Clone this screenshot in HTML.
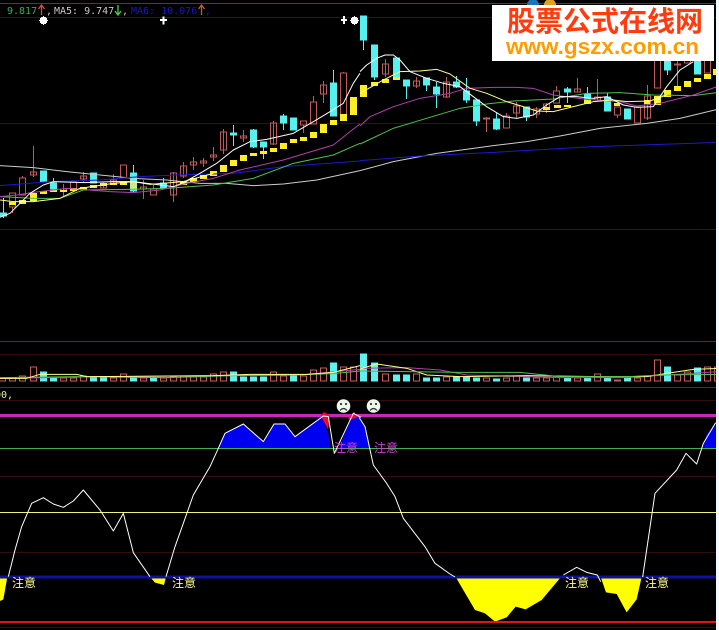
<!DOCTYPE html>
<html><head><meta charset="utf-8"><style>
html,body{margin:0;padding:0;background:#000;width:719px;height:630px;overflow:hidden}
svg{position:absolute;left:0;top:0;display:block}
.h{font-family:"DejaVu Sans Mono",monospace;font-size:10px}
.z{font-family:"WenQuanYi Zen Hei","Noto Sans CJK SC",sans-serif;font-size:12px}
.l{fill:none;stroke-width:3;stroke-linejoin:round}
</style></head><body>
<svg width="719" height="630" viewBox="0 0 719 630" shape-rendering="crispEdges">
<rect width="719" height="630" fill="#000"/>
<g stroke-width="1" fill="none">
<path d="M0 3.5H719" stroke="#a01818"/>
<path d="M0 17.5H719M0 123.5H719M0 229.5H719" stroke="#3c0e0e"/>
<path d="M0 341.5H719M0 387.5H719" stroke="#8a1818"/>
<path d="M0 354.5H719M0 400.5H719M0 476.5H719M0 552.5H719M0 627.5H719" stroke="#300c0c"/>
</g>
<g stroke="#c05a58" fill="none">
<path d="M9.5 193h6v14h-6zM12.5 207V213M19.5 178h6v17h-6zM22.5 176v2M30.5 172h6v3h-6zM33.5 146V177M60.5 189h6v2h-6zM63.5 184V196M70.5 182h6v7h-6zM73.5 189V192M80.5 176h6v3h-6zM83.5 172V182M100.5 184h6v4h-6zM103.5 182V188M110.5 180h6v3h-6zM113.5 174V185M120.5 165h6v13h-6zM140.5 187h6v2h-6zM143.5 180V199M150.5 189h6v6h-6zM153.5 185V189M170.5 173h6v22h-6zM173.5 172V202M180.5 166h6v10h-6zM183.5 162V178M190.5 162h6v3h-6zM193.5 157V170M200.5 161h6v2h-6zM203.5 158V167M210.5 155h6v2h-6zM213.5 147V161M220.5 132h6v18h-6zM223.5 129V154M240.5 136h6v2h-6zM243.5 130V142M270.5 123h6v21h-6zM273.5 121V145M300.5 121h6v4h-6zM303.5 125V133M310.5 102h6v22h-6zM313.5 96V102M320.5 85h6v9h-6zM323.5 81V103M340.5 73h6v42h-6zM343.5 72V73M382.5 64h6v10h-6zM385.5 59V77M413.5 81h6v5h-6zM416.5 77V88M443.5 82h6v15h-6zM446.5 77V98M483.5 118h6v1h-6zM486.5 117V132M503.5 116h6v12h-6zM506.5 113V116M513.5 106h6v7h-6zM516.5 102V118M533.5 109h6v5h-6zM536.5 107V118M543.5 104h6v5h-6zM546.5 103V113M553.5 91h6v12h-6zM556.5 86V91M574.5 89h6v3h-6zM577.5 78V92M594.5 97h6v3h-6zM597.5 79V101M614.5 107h6v8h-6zM617.5 115V118M634.5 107h6v16h-6zM644.5 96h6v22h-6zM647.5 85V120M654.5 60h6v28h-6zM677.5 60V87M674.5 64h6v1h-6zM684.5 60h6v3h-6zM704.5 60h6v13h-6z"/>
</g>
<g stroke="#55f0f0" fill="#55f0f0">
<path d="M0.5 213h6v3h-6zM3.5 198V218M40.5 171h6v11h-6zM50.5 183h6v6h-6zM53.5 178V192M90.5 173h6v10h-6zM130.5 173h6v18h-6zM133.5 165V192M160.5 183h6v5h-6zM163.5 178V189M230.5 133h6v2h-6zM233.5 125V146M250.5 130h6v17h-6zM253.5 129V148M260.5 142h6v5h-6zM263.5 147V159M280.5 116h6v7h-6zM283.5 114V130M290.5 118h6v12h-6zM330.5 83h6v33h-6zM333.5 70V83M360.5 16h6v24h-6zM363.5 40V50M371.5 45h6v32h-6zM374.5 77V80M393.5 58h6v20h-6zM403.5 80h6v6h-6zM406.5 86V99M423.5 78h6v7h-6zM426.5 85V91M433.5 87h6v7h-6zM436.5 82V108M453.5 82h6v5h-6zM456.5 76V88M463.5 91h6v9h-6zM466.5 78V103M473.5 100h6v21h-6zM476.5 121V126M493.5 119h6v10h-6zM496.5 113V130M523.5 107h6v10h-6zM526.5 117V121M564.5 89h6v3h-6zM567.5 87V103M584.5 94h6v6h-6zM587.5 87V104M604.5 97h6v14h-6zM607.5 93V97M624.5 109h6v10h-6zM664.5 60h6v10h-6zM667.5 70V75M694.5 60h6v14h-6z"/>
</g>
<g fill="#ffee22">
<path d="M9 202h7v3h-7zM19 200h7v4h-7zM30 193h7v8h-7zM40 191h7v3h-7zM50 190h7v2h-7zM60 190h7v2h-7zM70 188h7v3h-7zM80 187h7v3h-7zM90 185h7v3h-7zM100 183h7v3h-7zM110 183h7v2h-7zM120 182h7v3h-7zM180 181h7v4h-7zM190 178h7v4h-7zM200 175h7v4h-7zM210 171h7v5h-7zM220 165h7v7h-7zM230 160h7v6h-7zM240 155h7v6h-7zM250 153h7v3h-7zM260 151h7v3h-7zM270 148h7v4h-7zM280 143h7v6h-7zM290 139h7v4h-7zM300 137h7v4h-7zM310 132h7v6h-7zM320 124h7v9h-7zM330 120h7v5h-7zM340 114h7v7h-7zM350 97h7v18h-7zM360 85h7v12h-7zM371 82h7v4h-7zM382 79h7v4h-7zM393 77h7v3h-7zM543 107h7v3h-7zM554 105h7v3h-7zM564 105h7v2h-7zM584 100h7v4h-7zM614 103h6v3h-6zM644 100h6v4h-6zM654 96h7v9h-7zM664 90h7v7h-7zM674 86h7v5h-7zM684 81h7v6h-7zM694 78h7v4h-7zM704 74h7v5h-7zM713 69h6v6h-6z"/>
<path d="M130 181h7v9h-7z" fill="#c8f080"/>
</g>
<g shape-rendering="auto">
<g transform="scale(.33333)">
<polyline class="l" stroke="#ccc" points="0,497 100,503 200,515 300,525 400,535 500,540 600,550 680,550 760,557 850,552 950,540 1080,512"/>
<polyline class="l" stroke="#1a1ad0" points="0,557 150,545 300,540 420,530 530,525 700,520 850,500 1080,483"/>
<polyline class="l" stroke="#50c050" points="0,590 100,595 180,595 250,570 380,568 500,565 640,555 760,535 880,490 1000,465 1080,430"/>
<polyline class="l" stroke="#b040b0" points="0,590 50,585 100,577 200,565 330,575 400,578 480,570 560,550 640,535 720,510 850,480 1000,435 1050,395 1080,372"/>
<polyline class="l" stroke="#ffff88" points="0,600 40,605 100,605 180,595 240,565 340,550 400,545 450,553 550,545 640,520"/>
<polyline class="l" stroke="#fff" points="0,652 30,640 60,610 90,580 130,555 160,545 250,548 340,545 400,545 520,560 550,548 600,520 650,490 700,450 750,425 800,418 880,400 940,365 990,335 1030,310 1060,250 1080,220"/>
</g>
<g transform="translate(360 0) scale(.33333)">
<polyline class="l" stroke="#ccc" points="0,512 100,485 230,460 400,437 500,425 600,408 720,385 860,370 960,355 1077,327"/>
<polyline class="l" stroke="#1a1ad0" points="0,482 180,468 400,457 700,440 1077,427"/>
<polyline class="l" stroke="#50c050" points="0,432 100,385 200,355 300,325 380,312 460,303 580,297 680,280 780,278 880,285 1000,287 1077,277"/>
<polyline class="l" stroke="#b040b0" points="0,378 30,350 100,320 180,295 270,280 320,265 400,262 470,262 520,265 580,285 680,298 780,305 830,318 900,310 1000,285 1077,258"/>
<polyline class="l" stroke="#ffff88" points="0,280 70,240 120,215 180,213 230,208 270,222 330,265 380,280 440,305 490,320 530,333 580,335 640,320 700,305 760,300 800,305 870,303 920,285"/>
<polyline class="l" stroke="#fff" points="0,215 20,195 50,175 75,165 100,165 120,180 150,215 200,235 250,250 300,260 340,290 380,320 430,350 470,355 520,345 560,315 600,290 650,290 700,295 740,290 790,315 830,322 880,320 920,260 960,210 1000,185"/>
</g>
</g>
<path fill="#fff" d="M41 17h5v7h-5zM40 18h7v5h-7zM39 20h9v1h-9zM43 16h1v9h-1zM160 19h7v2h-7zM162.5 16.500h2v8h-2zM341 19h6v2h-6zM343 16h2v8h-2zM352 17h5v7h-5zM351 18h7v5h-7zM350 20h9v1h-9zM354 16h1v9h-1z"/>
<text class="h" x="7" y="14" fill="#30b050">9.817</text>
<text class="h" x="46" y="14" fill="#c8c8c8">,</text>
<text class="h" x="54" y="14" fill="#c8c8c8">MA5: 9.747</text>
<text class="h" x="122" y="14" fill="#c8c8c8">,</text>
<text class="h" x="131" y="14" fill="#1818c0">MA6: 10.076</text>
<text class="h" x="205" y="14" fill="#1818c0">,</text>
<g fill="none" stroke-width="1.3" shape-rendering="auto">
<path d="M41.500 15V5.500M38.500 9l3-4 3 4" stroke="#c85050"/>
<path d="M118 5V14.500M115 11l3 4 3-4" stroke="#50c850"/>
<path d="M201.500 15V5.500M198.500 9l3-4 3 4" stroke="#c85050"/>
</g>
<g fill="#60f0f0" stroke="#60f0f0">
<path d="M40.500 372h6v9h-6zM50.500 377h6v4h-6zM90.500 377h6v4h-6zM100.500 378h6v3h-6zM130.500 377h6v4h-6zM150.500 378h6v3h-6zM230.500 372h6v9h-6zM240.500 377h6v4h-6zM250.500 377h6v4h-6zM260.500 377h6v4h-6zM290.500 376h6v5h-6zM330.500 363h6v18h-6zM360.500 354h6v27h-6zM371.500 363h6v18h-6zM393.500 375h6v6h-6zM403.500 375h6v6h-6zM423.500 378h6v3h-6zM433.500 378h6v3h-6zM453.500 377h6v4h-6zM463.500 377h6v4h-6zM473.500 378h6v3h-6zM493.500 379h6v2h-6zM523.500 378h6v3h-6zM564.500 378h6v3h-6zM584.500 378h6v3h-6zM604.500 378h6v3h-6zM624.500 378h6v3h-6zM664.500 367h6v14h-6zM694.500 368h6v13h-6z"/>
</g>
<g fill="none" stroke="#c85f5c">
<path d="M-.5 378h6v3h-6zM9.500 378h6v3h-6zM19.500 376h6v5h-6zM30.500 367h6v14h-6zM60.500 378h6v3h-6zM70.500 378h6v3h-6zM80.500 376h6v5h-6zM110.500 378h6v3h-6zM120.500 374h6v7h-6zM140.500 378h6v3h-6zM160.500 378h6v3h-6zM170.500 377h6v4h-6zM180.500 376h6v5h-6zM190.500 377h6v4h-6zM200.500 377h6v4h-6zM210.500 374h6v7h-6zM220.500 372h6v9h-6zM270.500 372h6v9h-6zM280.500 376h6v5h-6zM300.500 376h6v5h-6zM310.500 370h6v11h-6zM320.500 368h6v13h-6zM340.500 367h6v14h-6zM350.500 367h6v14h-6zM382.500 374h6v7h-6zM413.500 374h6v7h-6zM443.500 377h6v4h-6zM483.500 378h6v3h-6zM503.500 378h6v3h-6zM513.500 376h6v5h-6zM533.500 378h6v3h-6zM543.500 378h6v3h-6zM553.500 377h6v4h-6zM574.500 378h6v3h-6zM594.500 374h6v7h-6zM614.500 380h6v1h-6zM634.500 378h6v3h-6zM644.500 376h6v5h-6zM654.500 360h6v21h-6zM674.500 375h6v6h-6zM684.500 372h6v9h-6zM704.500 367h6v14h-6zM714.500 367h6v14h-6z"/>
</g>
<g shape-rendering="auto">
<g transform="translate(0 335) scale(.33333)">
<polyline class="l" stroke="#b040b0" points="0,130 330,125 900,120 1080,103"/>
<polyline class="l" stroke="#50c050" points="0,128 230,125 500,128 700,122 880,120 1000,116 1080,108"/>
<polyline class="l" stroke="#ffff88" points="0,130 80,130 120,118 230,118 260,125 640,122 750,118 920,118 1000,112 1080,92"/>
</g>
<g transform="translate(360 335) scale(.33333)">
<polyline class="l" stroke="#b040b0" points="0,100 140,98 240,105 320,120 600,128 800,128 1077,110"/>
<polyline class="l" stroke="#ffff88" points="0,102 50,87 140,100 200,120 300,125 500,122 720,125 860,125 920,115 1000,103 1077,100"/>
<polyline class="l" stroke="#50c050" points="0,108 300,112 480,112 600,125 800,125 900,120 1077,118"/>
</g>
</g>
<text class="h" x="-5" y="398" fill="#e8e8a0">00,</text>
<g shape-rendering="auto">
<g transform="translate(0 400) scale(.33333)">
<polygon fill="#0000f0" points="655,145 675,100 730,72 790,125 822,72 855,72 885,110 965,48 985,100 992,145"/>
<polygon fill="#0000f0" points="1015,145 1060,40 1083,52 1083,145"/>
<polygon fill="#ffff00" points="0,531 22,531 10,598 0,603"/>
<polygon fill="#ffff00" points="450,531 498,531 492,555 465,548"/>
</g>
<g transform="translate(360 400) scale(.33333)">
<polygon fill="#0000f0" points="-3,52 15,80 28,145 -3,145"/>
<polygon fill="#0000f0" points="1077,66 1040,100 1028,145 1077,145"/>
<polygon fill="#ffff00" points="287,531 345,630 375,640 405,665 440,652 467,620 497,628 545,600 603,531"/>
<polygon fill="#ffff00" points="722,531 738,577 770,582 800,637 830,598 845,531"/>
</g>
</g>
<path d="M0 415.500H719" stroke="#c828b8" stroke-width="3"/>
<path d="M0 448.500H719" stroke="#40b050"/>
<path d="M0 512.500H719" stroke="#f0f080"/>
<path d="M0 577H719" stroke="#1010a0" stroke-width="3"/>
<path d="M0 622H719" stroke="#e01414" stroke-width="2"/>
<g shape-rendering="auto">
<g transform="translate(0 400) scale(.33333)">
<polygon fill="#ee0a30" points="962,47 972,36 990,47 984,88"/>
<polygon fill="#ee0a30" points="1044,54 1062,36 1074,51 1048,60"/>
<polyline class="l" stroke="#fff" points="25,530 45,450 65,380 95,310 130,293 160,312 190,322 220,303 250,270 300,330 340,393 370,340 400,458 450,530"/>
<polyline class="l" stroke="#fff" points="498,530 525,440 550,370 580,285 630,200 655,145 675,100 730,72 790,125 822,72 855,72 885,110 970,48 985,50 1003,160 1060,40 1083,52"/>
</g>
<g transform="translate(360 400) scale(.33333)">
<polyline class="l" stroke="#fff" points="-3,52 15,80 28,140 40,195 80,250 105,290 130,355 195,440 225,490 270,522 285,531"/>
<polyline class="l" stroke="#fff" points="610,525 650,502 680,517 712,525 722,545"/>
<polyline class="l" stroke="#fff" points="848,531 885,280 950,210 978,160 1010,192 1030,130 1067,68"/>
</g>
<g><circle cx="343.500" cy="406" r="6.800" fill="#eef8ea"/><circle cx="341" cy="404" r="1.100" fill="#333"/><circle cx="346" cy="404" r="1.100" fill="#333"/><path d="M340 410.500q3.500-4 7 0" fill="none" stroke="#333" stroke-width="1.200"/></g>
<g><circle cx="373.500" cy="406" r="6.800" fill="#eef8ea"/><circle cx="371" cy="404" r="1.100" fill="#333"/><circle cx="376" cy="404" r="1.100" fill="#333"/><path d="M370 410.500q3.500-4 7 0" fill="none" stroke="#333" stroke-width="1.200"/></g>
</g>
<text class="z" x="12" y="587" fill="#ffff90">注意</text>
<text class="z" x="172" y="587" fill="#ffff90">注意</text>
<text class="z" x="565" y="587" fill="#ffff90">注意</text>
<text class="z" x="645" y="587" fill="#ffff90">注意</text>
<text class="z" x="334" y="452" fill="#d040d0">注意</text>
<text class="z" x="374" y="452" fill="#d040d0">注意</text>
<circle cx="533" cy="5" r="6" fill="#2070c0" shape-rendering="auto"/>
<circle cx="550" cy="5" r="6" fill="#e0a020" shape-rendering="auto"/>
<rect x="492" y="5" width="222" height="56" fill="#fff"/>
<text x="507" y="31" fill="#ff3c10" style="font-family:'Noto Sans CJK SC',sans-serif;font-weight:700;font-size:28px">股票公式在线网</text>
<text x="506" y="54" fill="#ff9c00" style="font-family:'Liberation Sans',sans-serif;font-weight:700;font-size:22.500px">www.gszx.com.cn</text>
<rect x="716" y="0" width="3" height="630" fill="#f4fbff"/>
</svg>
</body></html>
